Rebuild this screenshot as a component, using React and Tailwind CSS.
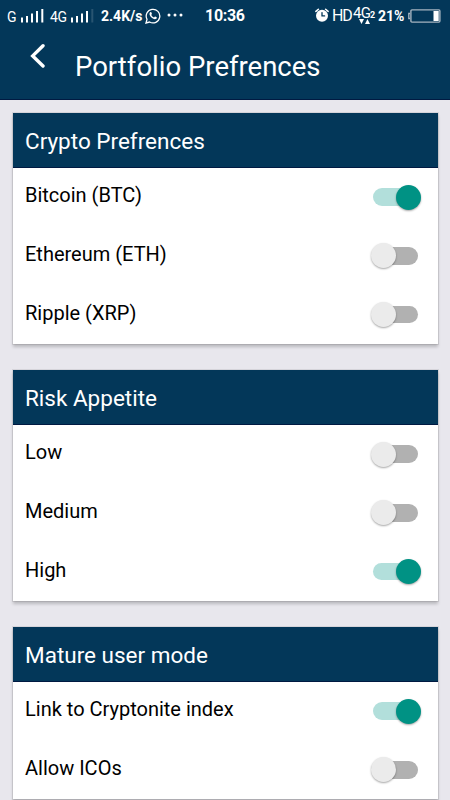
import { useState } from 'react';

const sections = [
  {
    title: 'Crypto Prefrences',
    items: [
      { label: 'Bitcoin (BTC)', on: true },
      { label: 'Ethereum (ETH)', on: false },
      { label: 'Ripple (XRP)', on: false }
    ]
  },
  {
    title: 'Risk Appetite',
    items: [
      { label: 'Low', on: false },
      { label: 'Medium', on: false },
      { label: 'High', on: true }
    ]
  },
  {
    title: 'Mature user mode',
    items: [
      { label: 'Link to Cryptonite index', on: true },
      { label: 'Allow ICOs', on: false }
    ]
  }
];

const Signal = ({ faded }) => (
  <svg width="29" height="16" viewBox="0 0 29 16" fill="#fff" className="shrink-0">
    <rect x="0" y="9.5" width="2" height="5" />
    <rect x="5" y="8" width="2" height="6.5" />
    <rect x="10" y="5.5" width="2" height="9" />
    <rect x="15" y="3" width="2" height="11.5" />
    <rect x="20.3" y="1" width="2" height="13.5" opacity={faded ? 0.15 : 1} />
  </svg>
);

const WhatsApp = () => (
  <svg width="16" height="16" viewBox="0 0 16 16" fill="none" stroke="#fff" strokeWidth="1.3" className="shrink-0 -mt-px">
    <path d="M1 15l1-3.7A6.8 6.8 0 1 1 4.6 14z" />
    <path
      d="M5.2 4.3c.4-.4.9-.4 1.1 0l.6 1.4c.1.3-.5.9-.6 1.2.6 1.2 1.4 2 2.7 2.6.4-.2.8-1 1.2-.9l1.4.7c.4.2.2 1.1-.3 1.5-1 .8-2.3.4-3.4-.2-1.5-.8-2.7-2.1-3.2-3.5-.4-1-.2-2.1.5-2.8z"
      fill="#fff"
      stroke="none"
    />
  </svg>
);

const Alarm = () => (
  <svg width="14" height="15" viewBox="0 0 14 15" fill="none" strokeLinecap="round" className="shrink-0 -mt-px">
    <circle cx="7" cy="7.7" r="6" fill="#fff" />
    <path d="M.9 3.4L3.4 1.2M13.1 3.4L10.6 1.2" stroke="#fff" strokeWidth="1.5" />
    <path d="M7 4.6v3.3h2.6" stroke="#033759" strokeWidth="1.3" />
  </svg>
);

const Battery = () => (
  <svg width="33" height="14" viewBox="0 0 33 14" fill="none" className="shrink-0 -mt-px">
    <path d="M2 4.5H.8v5H2" stroke="#aab8c4" strokeWidth="1.3" />
    <rect x="2.9" y="0.9" width="29" height="12.2" rx="1" stroke="#a6b4c0" strokeWidth="1.4" />
    <rect x="25.5" y="2" width="5.2" height="10" fill="#fff" />
  </svg>
);

const StatusBar = () => (
  <div className="h-8 flex items-center text-white whitespace-nowrap">
    <div className="flex items-center w-[205px] shrink-0 pl-[7px]">
      <span className="w-[14px] text-sm leading-4 pt-[2px]">G</span>
      <Signal />
      <span className="w-[21px] text-sm leading-4 pt-[2px] tracking-[-0.3px]">4G</span>
      <Signal faded />
      <span className="w-[45px] shrink-0 pl-px text-sm leading-4 font-bold">2.4K/s</span>
      <WhatsApp />
      <svg className="ml-[6px] shrink-0 -mt-[2px]" width="16" height="4" viewBox="0 0 16 4" fill="#fff">
        <circle cx="2" cy="2" r="1.5" />
        <circle cx="8" cy="2" r="1.5" />
        <circle cx="14" cy="2" r="1.5" />
      </svg>
    </div>
    <span className="w-[110px] shrink-0 text-base leading-5 font-bold tracking-[-0.3px]">10:36</span>
    <Alarm />
    <span className="w-[21px] ml-[3px] text-base leading-5 tracking-[-1.2px] -mt-px">HD</span>
    <span className="relative w-[25px] text-[15px] leading-4 tracking-[-0.8px] -mt-1">
      4G<span className="text-[9px] font-bold">2</span>
      <svg className="absolute left-[6px] top-[14px]" width="12" height="5" viewBox="0 0 12 5" fill="#fff">
        <path d="M0 0h5L2.5 5zM6 5h5L8.5 0z" />
      </svg>
    </span>
    <span className="w-[30px] text-sm leading-4 font-bold">21%</span>
    <Battery />
  </div>
);

const Toggle = ({ on, onChange }) => (
  <button
    type="button"
    role="switch"
    aria-checked={on}
    onClick={onChange}
    className="w-[50px] h-[26px] flex items-center justify-center"
  >
    <span className={`w-[45px] h-[17.5px] rounded-full flex items-center ${on ? 'bg-[#b2dfdb] justify-end' : 'bg-[#b1b1b1] justify-start'}`}>
      <span
        className={`w-[25px] h-[25px] shrink-0 rounded-full shadow-[0_1px_2px_rgba(0,0,0,0.35)] ${on ? 'bg-[#009284] -mr-[2.5px]' : 'bg-[#ebebeb] -ml-[2.5px]'}`}
      />
    </span>
  </button>
);

const SectionCard = ({ title, items, onToggle }) => (
  <div className="bg-white shadow-[0_0_0_1px_rgba(0,0,0,0.08),0_3px_3px_rgba(0,0,0,0.2)]">
    <h2 className="h-[55.25px] px-[12.5px] pt-[4px] flex items-center bg-[#033759] border-b border-[#001a42] text-white text-[22.5px]">
      {title}
    </h2>
    {items.map((item, i) => (
      <div key={item.label} className="h-[58.75px] pl-[12.5px] pr-[17px] flex items-center justify-between">
        <span className="text-xl text-black -mt-[4px]">{item.label}</span>
        <Toggle on={item.on} onChange={() => onToggle(i)} />
      </div>
    ))}
  </div>
);

const App = () => {
  const [data, setData] = useState(sections);

  const toggle = (section, index) => {
    setData(
      data.map((s, i) =>
        i === section ? { ...s, items: s.items.map((item, j) => (j === index ? { ...item, on: !item.on } : item)) } : s
      )
    );
  };

  return (
    <div className="w-[450px] h-[800px] overflow-hidden bg-[#e8e7ed] font-[Roboto,sans-serif]">
      <header className="h-[100px] bg-[#033759] border-b border-[#001a42]">
        <StatusBar />
        <div className="flex items-start">
          <button type="button" className="w-[75px] pl-[30px] pt-[11px]" aria-label="Back">
            <svg width="16" height="25" viewBox="0 0 16 25" fill="none" stroke="#fff" strokeWidth="3.4" strokeLinecap="round">
              <path d="M13 2.8L2.7 12.9 13 23" />
            </svg>
          </button>
          <h1 className="pt-[15px] text-white text-[27.5px] leading-10">Portfolio Prefrences</h1>
        </div>
      </header>
      <main className="px-[12.5px] pt-[12.5px] flex flex-col gap-[25.5px]">
        {data.map((section, i) => (
          <SectionCard key={section.title} title={section.title} items={section.items} onToggle={(j) => toggle(i, j)} />
        ))}
      </main>
    </div>
  );
};

export default App;
